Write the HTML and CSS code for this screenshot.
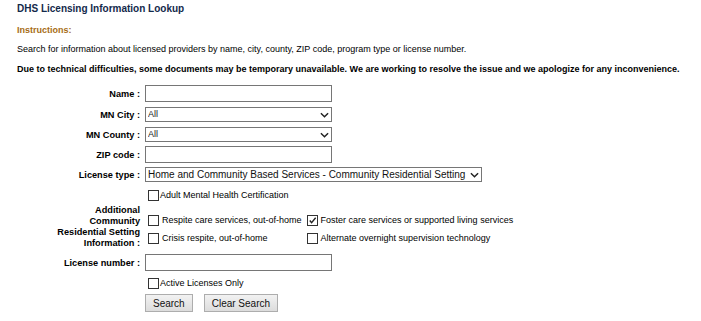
FILE: index.html
```html
<!DOCTYPE html>
<html lang="en">
<head>
  <meta charset="UTF-8"/>
  <title>DHS Licensing Information Lookup</title>
  <link rel="stylesheet" href="styles.css">
</head>
<body>
  <div class="page">
    <h1 class="title">DHS Licensing Information Lookup</h1>
    <h2 class="instr">Instructions:</h2>
    <p class="note">Search for information about licensed providers by name, city, county, ZIP code, program type or license number.</p>
    <p class="note strong">Due to technical difficulties, some documents may be temporary unavailable. We are working to resolve the issue and we apologize for any inconvenience.</p>

    <form class="lookup">
      <div class="row">
        <label class="lbl" for="name">Name :</label>
        <input class="txt" type="text" id="name">
      </div>
      <div class="row">
        <label class="lbl" for="city">MN City :</label>
        <div class="sel">
          <select id="city"><option>All</option></select>
          <svg class="chev" viewBox="0 0 10 6"><path d="M1 1l4 4 4-4" fill="none" stroke="#222" stroke-width="1.6"/></svg>
        </div>
      </div>
      <div class="row">
        <label class="lbl" for="county">MN County :</label>
        <div class="sel">
          <select id="county"><option>All</option></select>
          <svg class="chev" viewBox="0 0 10 6"><path d="M1 1l4 4 4-4" fill="none" stroke="#222" stroke-width="1.6"/></svg>
        </div>
      </div>
      <div class="row">
        <label class="lbl" for="zip">ZIP code :</label>
        <input class="txt" type="text" id="zip">
      </div>
      <div class="row">
        <label class="lbl" for="ltype">License type :</label>
        <div class="sel wide">
          <select id="ltype"><option>Home and Community Based Services - Community Residential Setting</option></select>
          <svg class="chev" viewBox="0 0 10 6"><path d="M1 1l4 4 4-4" fill="none" stroke="#222" stroke-width="1.6"/></svg>
        </div>
      </div>
      <div class="row chk-row first">
        <span class="lbl"></span>
        <label class="chk"><span class="box"></span>Adult Mental Health Certification</label>
      </div>
      <div class="row extra">
        <span class="lbl"><span class="multi">Additional Community Residential Setting Information :</span></span>
        <div class="grid">
          <label class="chk"><span class="box"></span>Respite care services, out-of-home</label>
          <label class="chk"><span class="box on"><svg viewBox="0 0 10 10"><path d="M2 5l2 2.5L8.5 2" fill="none" stroke="#222" stroke-width="1.5"/></svg></span>Foster care services or supported living services</label>
          <label class="chk"><span class="box"></span>Crisis respite, out-of-home</label>
          <label class="chk"><span class="box"></span>Alternate overnight supervision technology</label>
        </div>
      </div>
      <div class="row">
        <label class="lbl" for="lnum">License number :</label>
        <input class="txt" type="text" id="lnum">
      </div>
      <div class="row chk-row active">
        <span class="lbl"></span>
        <label class="chk"><span class="box"></span>Active Licenses Only</label>
      </div>
      <div class="row">
        <span class="lbl"></span>
        <div class="btns">
          <button type="button" class="btn">Search</button>
          <button type="button" class="btn">Clear Search</button>
        </div>
      </div>
    </form>
  </div>
</body>
</html>
```

FILE: styles.css
```css
/* ===== Global ===== */
* { margin:0; padding:0; box-sizing:border-box; }
body { font-family:"Liberation Sans", Arial, sans-serif; font-size:9px; color:#000; background:#fff; }
.page { padding:3px 17px; }

/* ===== Header text ===== */
.title { font-size:10px; font-weight:bold; color:#13294b; line-height:12px; }
.instr { font-size:9px; font-weight:bold; color:#a66c15; margin-top:9px; line-height:12px; }
.note { line-height:12px; margin-top:7px; }
.note.strong { font-weight:bold; margin-top:8px; }

/* ===== Form ===== */
.lookup { margin-top:10px; display:flex; flex-direction:column; }
.row { display:flex; align-items:center; gap:5px; min-height:17px; margin-bottom:3px; }
.row:nth-child(2) { margin-top:1px; }
.lbl { width:123px; text-align:right; font-weight:bold; flex:none; font-size:9.2px; }
.multi { display:inline-block; max-width:84px; line-height:11px; }
.txt { width:187px; height:17px; border:1px solid #767676; background:#fff; font:inherit; }
.sel { position:relative; width:187px; height:15px; }
.sel.wide { width:337px; }
.sel select { appearance:none; -webkit-appearance:none; width:100%; height:100%; border:1px solid #767676; background:#fff; font:inherit; color:#222; padding:0 14px 0 2px; line-height:13px; border-radius:0; }
.sel.wide select { font-size:10px; color:#111; }
.chev { position:absolute; right:3px; top:5px; width:9px; height:6px; pointer-events:none; }

.chk { display:flex; align-items:center; gap:1px; white-space:nowrap; line-height:11px; }
.box { width:11px; height:11px; border:1px solid #333; background:#fff; display:inline-flex; flex:none; }
.box svg { width:9px; height:9px; }
.chk-row { min-height:14px; }
.chk-row.first { margin-top:2px; }
.chk-row.active { margin-top:2px; }
.chk-row .chk { margin-left:3px; }

.extra { align-items:flex-start; margin-top:0; margin-bottom:5px; }
.grid { display:grid; grid-template-columns:auto auto; column-gap:5px; row-gap:7px; margin-left:3px; margin-top:10px; }
.grid .chk { gap:3px; }

.btns { display:flex; gap:11px; margin-top:1px; }
.btn { font:inherit; font-size:10px; height:18px; padding:0 7px; border:1px solid #adadad; background:linear-gradient(#f2f2f2,#dcdcdc); color:#111; border-radius:0; }
```
